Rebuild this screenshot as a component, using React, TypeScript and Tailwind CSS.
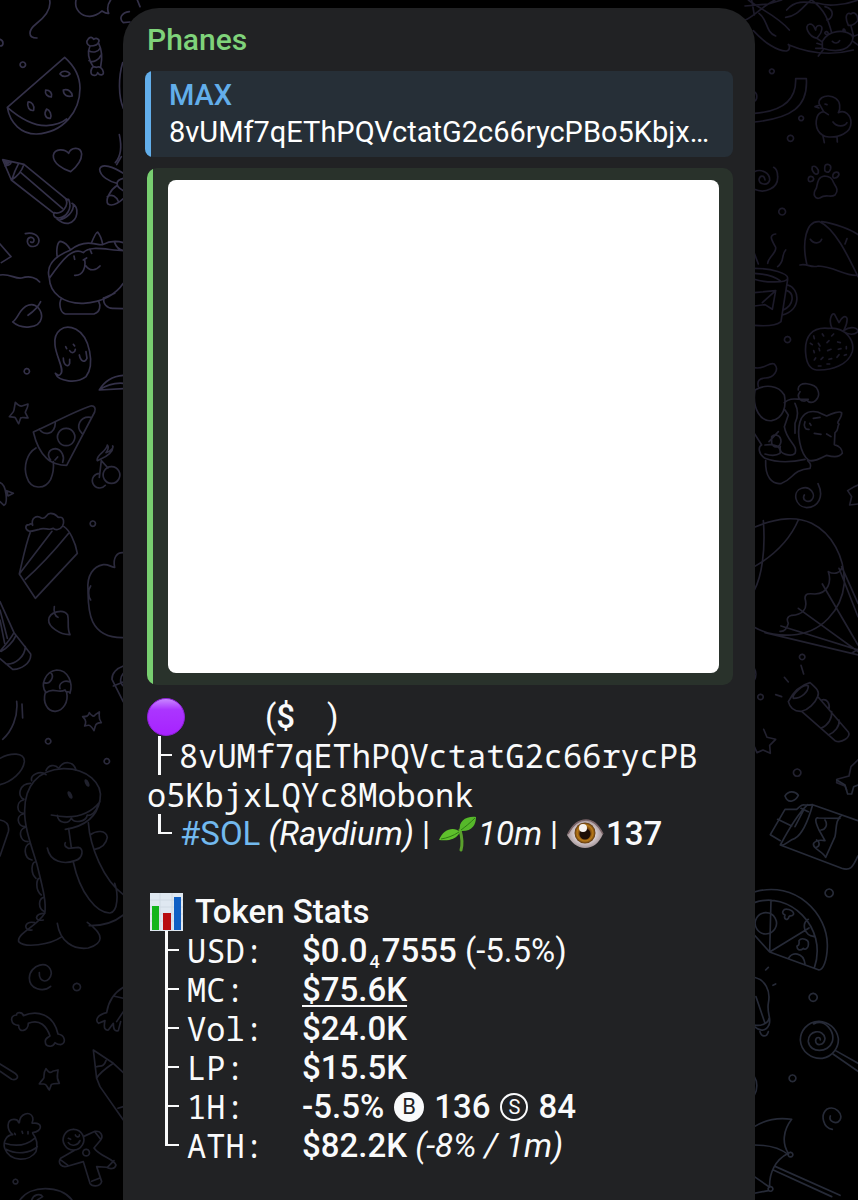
import type { ReactNode } from 'react';

const ADDRESS = '8vUMf7qEThPQVctatG2c66rycPBo5KbjxLQYc8Mobonk';

const DOODLES = [
  {
    id: 'left-top',
    transform: 'translate(0 0) scale(0.3333)',
    color: '#343149',
    paths: [
      'M149 0C155 30 130 55 108 72C85 90 82 114 111 114',
      'M228 0C222 30 245 50 270 49C290 48 300 38 306 33C314 38 322 41 326 40C320 25 325 10 332 0',
      'M388 35C365 38 355 55 370 68L390 66M412 0L420 20',
      'M264 118C270 108 278 112 281 118C290 112 300 118 296 126C294 134 282 138 270 138C260 134 258 124 264 118ZM270 138C262 155 264 180 280 200M296 130C306 150 306 180 302 200M266 152C280 160 295 155 300 145M267 182C280 190 298 178 303 165M280 200C270 208 270 226 282 226C288 228 292 222 293 218C300 228 312 226 310 216C308 206 300 198 290 202Z',
      'M194 172L22 322C30 370 65 403 110 402C190 398 240 335 240 265C240 225 220 195 194 172ZM22 322C60 355 100 378 140 377C165 376 185 370 200 357',
      'M180 222C186 210 205 212 210 222C203 231 187 232 180 222ZM137 270C150 270 158 280 154 291C142 290 134 282 137 270ZM190 270C205 266 216 276 217 288C203 292 190 286 190 270ZM84 306C95 304 105 318 101 331C88 334 80 320 84 306ZM140 327C150 330 156 345 151 355C137 356 130 342 140 327Z',
      'M68 186A8 8 0 1 0 69 186M0 118C12 122 12 138 0 138',
      'M212 515C190 508 158 490 160 466C164 444 195 446 206 460C212 442 242 438 245 462C245 485 228 502 212 515Z',
      'M8 479L72 493C66 512 55 528 34 540ZM72 493L202 600M60 516L188 626M34 540L162 640M56 490C45 510 40 525 36 538M30 484C35 488 34 494 15 498',
      'M198 598C206 615 188 645 162 638C158 648 165 655 176 654C200 652 218 625 206 598ZM216 610C238 622 236 660 206 670C192 672 180 665 170 656M220 614C222 635 200 656 178 660',
      'M358 404C366 440 362 470 346 488M364 470L350 494M370 520C340 500 304 488 299 508C300 530 330 545 350 550M370 535C345 540 345 560 370 572M352 556C330 570 315 600 324 612C340 622 360 605 370 596M322 590C335 580 350 590 356 606M368 188C355 230 355 290 370 325',
      'M76 701C96 696 116 704 117 722C116 744 84 746 82 725C82 710 100 708 102 720C102 727 98 729 92 726',
      'M0 732L33 770L4 788M0 825C30 820 45 838 65 834C90 826 110 834 119 846',
      'M172 772C168 750 172 724 182 724C192 726 205 738 212 750C230 735 255 728 274 730C280 715 288 696 293 696C300 705 306 720 308 734C330 722 350 722 370 728M148 835C138 800 160 770 212 750M148 835C150 880 190 912 250 910C310 908 350 880 370 850M148 835C190 775 220 740 250 758C270 735 320 750 370 752M274 730C290 732 300 736 308 734M344 728C350 745 360 750 370 752M310 895L344 880',
      'M222 768L224 778M270 748L275 760M250 780L260 774M254 780C258 800 250 828 224 826M258 798C270 816 290 810 300 798',
      'M184 896C176 910 180 938 196 942L282 942C302 936 302 915 296 904M312 894C308 910 320 926 340 925L370 926',
      'M38 966C55 955 58 925 84 916C110 906 128 935 124 955C118 985 65 990 38 966ZM84 946C100 935 115 920 122 905',
      'M166 1120C175 1145 230 1152 258 1130C285 1095 270 1010 228 988C190 970 160 995 165 1035C168 1070 195 1110 182 1122C178 1130 172 1124 166 1120ZM190 1074C190 1095 205 1105 209 1090L209 1078M238 1065C242 1085 255 1090 261 1075L258 1055M197 1040L200 1046M220 1033L224 1038M209 1052C215 1062 225 1058 226 1048',
      'M80 1106A8 8 0 1 0 81 1106M298 1170C315 1140 345 1128 370 1126M298 1170C320 1155 345 1148 370 1150M298 1170L370 1166',
    ],
  },
  {
    id: 'left-middle',
    transform: 'translate(0 390) scale(0.3333)',
    color: '#2b2a3c',
    paths: [
      'M46 37C54 45 60 50 66 48L84 42C84 55 76 62 76 68L84 84C72 84 68 80 62 84L56 101C50 92 48 84 44 82L28 80C34 72 42 66 42 60Z',
      'M100 126C160 100 220 65 272 48C284 46 288 56 284 66L200 226C180 226 150 218 140 205C118 185 108 160 100 126ZM118 117C130 138 165 135 166 98M272 82C240 78 225 110 246 130M198 115A26 26 0 1 0 199 115M188 217C195 200 185 178 166 176C145 178 140 195 152 210M165 210L173 201',
      'M108 174C80 190 70 230 80 260C92 300 135 300 152 268C160 250 162 235 160 215',
      'M292 212C286 195 320 185 322 165C328 172 324 180 318 188C335 184 342 170 338 168C342 185 320 200 304 206ZM304 212L298 262M304 212L324 234M300 250A22 22 0 1 0 316 286M334 230A25 25 0 1 0 335 230M0 278C20 285 24 340 12 346L0 335M20 302L40 310L24 318Z',
      'M88 424C74 418 74 404 88 404C92 400 96 402 98 406C92 384 110 374 124 384C140 390 136 370 152 370C172 370 170 384 178 382C194 380 192 400 188 408C180 420 165 422 160 415C145 424 135 410 118 418C108 420 100 424 88 424ZM92 424C78 460 70 500 58 552L106 625L232 490C226 455 208 420 192 410M58 552L156 424M76 568C120 530 165 480 206 430',
      'M278 393A8 8 0 1 0 279 393M370 488C350 486 338 505 344 532C330 530 325 522 310 524C280 530 260 555 264 600C265 650 260 745 370 743M272 588C264 600 264 618 272 630',
      'M210 734C180 735 145 710 146 690C148 665 190 655 203 675C208 695 200 715 210 734ZM163 650C160 665 166 680 174 682',
      'M0 635L42 728C30 750 20 760 0 784M0 660L22 745M0 690L14 760M42 728L92 792C95 820 60 840 38 838L0 806M76 770C75 800 45 825 18 822M48 736C40 755 20 776 4 784',
      'M138 908C120 885 135 845 170 840C205 840 220 880 210 910C205 898 200 914 195 900C175 912 160 890 138 908ZM136 908C128 935 140 965 166 964C190 962 206 935 200 908M152 848C165 860 150 885 132 878M210 876C190 868 175 882 180 896',
      'M370 828C350 835 335 850 336 868L370 936M370 850C360 862 358 880 370 888M340 888L370 876',
      'M268 968C275 978 282 982 286 974L298 966C298 980 294 985 304 998C294 998 288 1000 286 1008L282 1022C276 1012 270 1004 264 1006L254 1008C258 998 260 992 248 980C258 980 266 980 268 968Z',
      'M50 934C55 980 35 1025 8 1048M66 942L68 984M144 1046A8 8 0 1 0 145 1046M320 1106A8 8 0 1 0 321 1106',
    ],
  },
  {
    id: 'left-bottom',
    transform: 'translate(0 750) scale(0.3333)',
    color: '#20212d',
    paths: [
      'M0 25C30 8 75 5 73 35C70 65 35 95 0 104M0 210C25 215 28 230 25 245L0 318',
      'M74 180C75 110 110 60 190 56C260 55 310 100 300 150C290 205 250 230 196 238M154 195C200 205 260 205 300 155M74 180C72 230 95 290 110 340C130 420 140 460 134 490C110 530 50 550 56 575C75 595 150 585 186 560',
      'M172 196C175 220 205 225 214 204C220 220 258 218 262 195C272 200 290 185 294 165M95 92C90 75 120 60 138 74M138 62C145 44 165 42 176 55M178 53C190 32 220 32 228 60M72 148C50 140 58 100 92 100M72 190C48 190 48 155 70 150M76 230C50 230 48 195 70 192M84 275C60 275 52 240 76 232M96 330C70 325 70 285 90 280M108 385C90 370 95 335 106 336M124 435C104 420 110 385 118 385M134 485C112 475 116 445 132 442M130 510C100 515 105 490 134 490M96 540C70 545 70 510 104 518',
      'M142 294C150 335 190 345 225 332C250 325 252 295 235 292L205 295C195 290 192 285 196 278M206 236L214 292M220 336C240 430 290 490 330 489C355 485 355 430 344 400M265 218C270 290 310 390 370 434M270 255C290 240 318 240 322 262C318 285 300 295 284 298M172 520C180 575 220 600 265 594C310 580 315 555 262 517M268 527C310 528 345 515 370 495',
      'M152 709C130 728 88 718 88 684C88 645 150 625 154 670C150 702 115 700 118 668M230 700A11 11 0 1 0 231 700',
      'M56 826C30 825 28 795 50 795C48 785 68 785 70 797C110 780 160 790 174 852C195 855 200 880 182 884C170 884 168 880 165 878C158 895 136 890 136 875C134 865 146 862 150 858C140 830 120 805 85 820C85 845 55 850 56 826Z',
      'M370 712C340 730 325 755 320 788C290 795 285 812 296 820L315 812C310 835 315 842 325 840L340 820C340 840 345 845 355 842L362 815M340 738L370 745M350 815L370 785',
      'M0 942L45 970C60 980 50 992 35 988L0 964M280 900L340 940C310 960 295 975 290 985ZM290 985L300 1010L370 1110M340 940L370 968M290 950C300 945 310 955 318 932M354 1075L370 1070',
      'M138 956C146 968 150 970 158 964L174 960C174 975 166 980 178 1000C168 1000 158 1000 154 1004L148 1020C140 1010 140 1002 132 1002L118 1002C124 990 132 988 132 982C132 975 130 968 138 956Z',
      'M38 1154C20 1140 18 1108 42 1108C60 1108 52 1120 58 1118C60 1090 90 1082 98 1102C102 1118 92 1118 98 1120C130 1115 128 1145 98 1148M38 1154C20 1155 8 1175 14 1195C30 1238 90 1235 108 1205C115 1180 110 1165 98 1150M14 1180C40 1188 75 1190 104 1165M18 1198C50 1215 90 1210 112 1190M44 1150L46 1154M66 1144L68 1150M84 1145L84 1152',
      'M220 1138A31 31 0 1 0 221 1138M250 1160L285 1144C305 1142 310 1160 302 1170L282 1194C300 1220 340 1225 348 1245C345 1258 330 1258 320 1252L290 1250L305 1295C300 1312 275 1310 270 1300L250 1235L205 1248C185 1255 172 1240 182 1225L225 1200M258 1198A10 10 0 1 0 259 1198M205 1165L212 1168M226 1155C230 1165 240 1160 238 1155M205 1178C215 1192 235 1185 240 1172M180 1228L204 1246M285 1146L302 1168M275 1294L300 1284M322 1252L342 1232',
      'M46 1288A7 7 0 1 0 47 1288M60 1350C90 1305 180 1305 216 1350M95 1350C100 1335 120 1328 128 1340L112 1350',
    ],
  },
  {
    id: 'right-top',
    transform: 'translate(745 0) scale(0.3333)',
    color: '#1c1a29',
    paths: [
      'M0 60C20 55 50 20 90 0M0 18L70 12L110 0M20 0L28 45M10 0C50 30 100 50 133 90M42 40C70 60 60 95 92 108M25 92C60 130 100 155 125 153C140 148 130 130 130 134C180 155 250 170 325 150M122 52C160 50 180 10 200 0M200 0C240 30 250 60 260 98M125 30C150 0 180 5 220 10C250 20 300 15 339 0M240 20C275 30 260 60 245 60',
      'M232 124C250 90 300 85 325 110C320 150 280 160 232 145ZM216 115C190 110 175 75 195 72C208 72 208 85 212 90C212 72 235 72 230 90C228 105 218 108 216 115L232 126M310 76C298 50 305 35 318 42C325 35 340 40 338 62C330 72 322 78 310 76ZM318 78L325 105M262 124C268 132 280 130 284 122M216 130L232 135M212 145L230 145M220 168L234 150M322 110L339 104M325 125L339 135M246 104C232 100 245 88 250 100M296 96C290 84 302 85 300 96',
      'M80 207A7 7 0 1 0 81 207M168 348A7 7 0 1 0 169 348M136 406A9 9 0 1 0 137 406M111 625A10 10 0 1 0 112 625M127 1010A9 9 0 1 0 128 1010M28 275C38 280 38 300 28 304',
      'M28 340C100 335 155 310 152 236L184 236C190 320 140 355 28 366',
      'M222 310C220 280 280 280 284 315C286 330 282 335 280 338C300 328 318 345 318 368C318 400 280 412 252 411C220 408 208 380 216 352C220 340 228 336 236 335ZM236 335L250 344M222 316L210 320L222 324M264 366C275 382 300 380 306 368M240 312L246 314M234 408L238 428M276 410L277 426',
      'M28 515C50 505 75 520 74 540C70 558 42 555 42 538C45 525 58 525 60 540M28 568C60 582 100 565 98 530C98 515 92 505 86 502',
      'M238 528C218 530 218 550 214 565C200 585 212 598 224 594C245 580 255 595 270 585C285 568 268 556 266 548C262 535 255 528 238 528ZM202 500C198 515 215 530 220 518C222 505 210 496 202 500ZM240 498C235 520 252 522 257 506C260 492 242 490 240 498ZM264 524C260 540 278 535 282 524C282 514 268 514 264 524ZM190 536C188 550 206 545 206 536C204 528 192 526 190 536Z',
      'M186 795C170 730 182 660 224 665C270 685 310 770 339 830M230 665C270 670 320 690 339 704M165 795C190 790 195 805 220 798C270 800 300 830 339 826M196 718C205 732 225 732 230 718M300 732L306 716',
      'M68 790C70 770 95 760 92 742C80 720 70 705 92 702M98 800C120 785 108 765 122 750M28 805C80 805 130 820 128 835C125 850 60 848 28 838M28 820C60 822 90 830 105 842M128 838L108 965C90 980 50 978 28 976M128 855C165 865 170 930 112 945M126 872C148 880 148 915 115 930M28 878L92 872L82 928L60 914L28 918M92 872L52 908M28 760L40 792',
      'M182 1060C178 1010 200 980 250 985C300 980 330 1020 322 1055C310 1095 260 1112 215 1110C190 1108 184 1085 182 1060ZM262 986C250 965 258 940 268 942L282 968C290 950 302 945 306 955C308 970 302 980 296 992C320 975 339 985 339 995C330 1005 310 1006 296 995',
      'M206 1008L208 1016M232 1002L236 1008M260 1008L266 1002M196 1030L202 1034M220 1030L225 1038M246 1028L252 1022M278 1026L286 1028M206 1052L208 1058M222 1045L224 1052M248 1052L258 1048M280 1048L288 1046M208 1080L212 1074M228 1078L234 1072M252 1078L260 1076M276 1072L282 1064M298 1066L304 1064M220 1098L228 1098M246 1092L254 1092M304 1040L304 1046',
      'M28 1103C60 1110 70 1085 88 1092C105 1110 85 1135 60 1134C45 1136 35 1140 40 1160',
    ],
  },
  {
    id: 'right-middle',
    transform: 'translate(745 390) scale(0.3333)',
    color: '#22212f',
    paths: [
      'M30 0C20 60 50 95 80 92C115 85 125 50 118 15C100 -15 60 -18 30 0M118 38C140 20 150 30 190 28M165 5C150 25 175 40 185 30C200 50 230 25 218 0C215 -20 155 -30 160 0M120 60L130 75L118 110C125 155 160 165 150 190C140 200 100 195 106 170M150 40C160 60 160 80 150 100L150 130M28 130L50 165C40 170 38 190 60 205C100 220 150 215 180 208M60 165C90 160 110 170 105 190C90 200 70 195 60 192M72 155L100 125M80 140C90 130 108 135 108 155C105 175 85 175 80 160Z',
      'M165 95C175 65 200 62 218 66L245 78C260 70 285 62 290 68C292 85 270 98 282 102C275 112 282 122 270 128L268 164C285 168 292 180 292 190C280 205 260 200 245 196C225 205 205 218 190 210C165 190 155 130 165 95ZM205 85L225 82M208 130L228 133M245 132L258 140M180 95C175 108 180 120 192 118M194 100L198 106',
      'M62 212C60 260 80 285 110 280C145 268 140 240 195 235C200 225 195 218 188 212',
      'M219 281C238 320 220 352 185 353C150 350 140 305 170 295C195 285 215 315 200 330C188 340 170 330 178 315M339 285L328 290L308 302L320 320L314 345L339 342',
      'M28 412C100 380 160 380 200 400C260 430 300 500 298 580C290 660 230 730 140 735C100 738 60 730 28 712M55 392C62 480 50 560 28 600M160 390C130 460 80 500 28 530M250 545C260 575 250 610 210 612C190 610 180 610 180 625C190 660 170 675 140 676C125 680 125 690 130 700C125 720 115 725 105 724M250 545C270 555 285 548 290 535M282 535L339 680M290 530L339 640M232 582L339 765M160 655L339 785M108 708L339 780M60 728L339 795M320 790L339 778',
      'M171 793A8 8 0 1 0 172 793M46 913A8 8 0 1 0 47 913M156 1137A11 11 0 1 0 157 1137M28 835C34 845 34 860 28 870',
      'M168 826L176 852M118 862L130 876M92 914L110 920M130 935C145 905 170 885 195 878C215 895 225 905 218 920C210 940 190 960 170 964C150 965 135 955 130 935ZM145 925C140 915 175 880 190 888C190 905 170 925 145 925ZM170 964L270 1052C290 1062 320 1040 310 1026L220 922M230 930C245 925 256 940 252 958M228 1015C250 1005 262 985 260 965M250 1035C270 1028 285 1008 282 990',
      'M56 1018L66 1042L92 1048L74 1066L76 1090L54 1080L36 1088L28 1070M339 1110L318 1130L312 1158L276 1168L275 1178L300 1188L305 1200',
    ],
  },
  {
    id: 'right-bottom',
    transform: 'translate(745 780) scale(0.3333)',
    color: '#262a37',
    paths: [
      'M275 0L300 15L308 42L320 42L326 20L339 15',
      'M120 48C130 32 150 32 160 46C152 62 130 75 120 48ZM155 88L120 88L76 164L106 182M98 118L140 138M155 88C180 65 170 80 203 74C190 120 175 160 150 175C130 180 120 200 106 195C130 150 160 100 188 74M150 140L175 92M168 85L190 95M203 74L339 122M106 195L290 265C320 275 325 255 339 228M290 105C270 120 275 150 270 170L242 232C235 215 200 205 206 190C215 178 230 180 240 182L222 150C205 115 215 112 220 114L285 115M240 120C250 135 240 150 228 150M215 180C225 185 225 198 215 202',
      'M252 327A12 12 0 1 0 253 327M204 640A12 12 0 1 0 205 640M142 885A10 10 0 1 0 143 885',
      'M28 336C150 300 250 400 247 500C246 540 235 570 222 570L74 516L28 465M28 368C130 330 250 440 208 564M78 360L74 516L192 444M62 398A32 32 0 1 0 63 398M190 418C170 430 175 465 208 470M130 536C140 515 175 515 180 552M115 392C120 382 145 390 146 402C142 412 135 404 132 410C128 424 115 418 120 405C112 402 112 396 115 392ZM162 482C170 470 192 480 190 490C192 504 180 512 175 505C165 515 155 508 156 498C165 496 162 488 162 482Z',
      'M62 570L70 562M84 616L92 612M28 592C60 600 78 630 70 670C65 700 80 715 72 735C60 760 40 750 28 740M33 650L60 730M28 735C45 740 70 730 72 715M45 755C50 772 65 772 70 755',
      'M222 724C185 725 166 755 166 780C168 815 200 838 232 835C265 830 282 800 280 775C275 745 250 725 222 724ZM206 732C240 715 270 755 262 785C250 820 195 820 190 785C188 750 235 745 240 775C238 798 210 800 212 780C214 770 226 770 226 780M272 812L339 850M264 822L339 874',
      'M262 1048C235 1045 225 1005 245 988C270 975 295 1000 285 1020C275 1035 250 1025 256 1008M28 1040C60 1020 100 1012 140 1018C115 1050 110 1090 130 1120C90 1140 72 1180 74 1222L28 1190M28 1095C60 1095 100 1100 130 1124M136 1117A7 7 0 1 0 137 1117M76 1220A7 7 0 1 0 77 1220M28 1240L70 1232M92 1160L285 1246M85 1170L260 1250M28 890C38 905 38 930 28 945',
    ],
  },
];

function Wallpaper() {
  return (
    <svg
      className="absolute inset-0 h-full w-full"
      viewBox="0 0 858 1200"
      preserveAspectRatio="xMidYMin slice"
      fill="none"
      strokeWidth={5}
      strokeLinecap="round"
      strokeLinejoin="round"
      aria-hidden="true"
    >
      {DOODLES.map(({ id, transform, color, paths }) => (
        <g key={id} transform={transform} stroke={color}>
          {paths.map((d) => (
            <path key={d} d={d} />
          ))}
        </g>
      ))}
      <path d="M3 160L11 162L6 166Z" fill="#343149" />
      <g fill="#20212d">
        <ellipse cx="70" cy="795" rx="2" ry="4" transform="rotate(-25 70 795)" />
        <ellipse cx="87" cy="783" rx="2" ry="4" transform="rotate(-25 87 783)" />
      </g>
    </svg>
  );
}

function PurpleCircle() {
  return (
    <svg className="h-10 w-10 shrink-0" viewBox="0 0 40 40" aria-hidden="true">
      <defs>
        <linearGradient id="purple" x1="0" y1="0" x2="0" y2="1">
          <stop offset="0" stopColor="#c98bff" />
          <stop offset="0.3" stopColor="#ab35ff" />
          <stop offset="1" stopColor="#a722ff" />
        </linearGradient>
      </defs>
      <circle cx="19" cy="20" r="18.5" fill="url(#purple)" stroke="#8d1fd6" />
    </svg>
  );
}

function Seedling() {
  return (
    <svg className="h-10 w-10 shrink-0" viewBox="0 0 40 40" aria-hidden="true">
      <path
        d="M22 16C24 23 25 29 23 36"
        fill="none"
        stroke="#5aa02c"
        strokeWidth="3"
        strokeLinecap="round"
      />
      <path d="M22 18C16 12 5 15 1 26C10 27 18 26 22 18Z" fill="#5fc02c" />
      <path d="M22 17C20 7 28 2 38 3C38 11 34 18 22 17Z" fill="#56b82a" />
      <path
        d="M3 25C9 24 15 22 21 18M23 16C27 13 32 9 37 4"
        fill="none"
        stroke="#2f7d14"
      />
    </svg>
  );
}

function Eye() {
  return (
    <svg className="h-10 w-10 shrink-0" viewBox="0 0 40 40" aria-hidden="true">
      <defs>
        <radialGradient id="eyeball">
          <stop offset="0.4" stopColor="#f1e9ec" />
          <stop offset="1" stopColor="#a39497" />
        </radialGradient>
        <radialGradient id="iris">
          <stop offset="0.4" stopColor="#5a2d0c" />
          <stop offset="0.75" stopColor="#b87a18" />
          <stop offset="1" stopColor="#5b3510" />
        </radialGradient>
      </defs>
      <path
        d="M1 21C7 10 13 6 20 6C28 6 33 12 37 20C33 29 27 34 19 34C11 34 5 28 1 21Z"
        fill="url(#eyeball)"
      />
      <path
        d="M2 20C7 10 13 6 20 6C28 6 33 12 37 20"
        fill="none"
        stroke="#7a6468"
        strokeWidth="1.5"
      />
      <circle cx="19" cy="19" r="10.5" fill="url(#iris)" />
      <circle cx="19" cy="20" r="5.5" fill="#1c0e07" />
      <circle cx="17" cy="14" r="4" fill="#f7f3f0" />
    </svg>
  );
}

function BarChart() {
  return (
    <svg className="h-10 w-9 shrink-0" viewBox="0 0 36 40" aria-hidden="true">
      <rect x="3" y="1" width="33" height="38" fill="#dfe8f1" />
      <path
        d="M3 8H36M3 15H36M3 22H36M3 29H36M13 1V39M25 1V39"
        stroke="#d0dae4"
      />
      <rect x="5" y="14" width="7" height="24" fill="#12b51c" />
      <rect x="16" y="21" width="8" height="17" fill="#b80d10" />
      <rect x="27" y="5" width="7" height="33" fill="#0f5fc4" />
    </svg>
  );
}

// ├ and └ in front of a line
function Branch({ last = false }: { last?: boolean }) {
  return (
    <span aria-hidden="true" className="flex h-[39px] w-3.5 shrink-0">
      <span
        className={
          last
            ? 'h-5 w-full border-b-2 border-l-[3px] border-gray-50'
            : 'h-full w-full border-l-[3px] border-gray-50'
        }
      >
        {!last && <span className="mt-[18px] block h-0.5 bg-gray-50" />}
      </span>
    </span>
  );
}

function Stat({
  label,
  last = false,
  children,
}: {
  label: string;
  last?: boolean;
  children: ReactNode;
}) {
  return (
    <div className="flex pl-[18px]">
      <Branch last={last} />
      <dt className="ml-2 w-[115px] shrink-0 font-['Noto_Sans_Mono','DejaVu_Sans_Mono',monospace] text-[32px] leading-[39px]">
        {label}
      </dt>
      <dd className="whitespace-nowrap font-medium">{children}</dd>
    </div>
  );
}

function App() {
  return (
    <div className="relative min-h-screen overflow-hidden bg-black pt-2 font-[Roboto,sans-serif] text-gray-50">
      <Wallpaper />
      <article className="relative ml-[123px] mr-[103px] min-h-[calc(100vh-8px)] rounded-t-[36px] bg-[#212224] pb-8 pl-6 pr-[22px] pt-3">
        <h1 className="text-[30px] font-medium leading-10 text-[#7fd37a]">
          Phanes
        </h1>

        <blockquote className="-ml-0.5 mt-[11px] flex overflow-hidden rounded-lg bg-[#262f37]">
          <span className="w-1.5 shrink-0 bg-[#62aeea]" />
          <div className="min-w-0 py-1.5 pl-[18px] pr-2">
            <p className="text-[29px] font-medium leading-9 text-[#62aeea]">
              MAX
            </p>
            <p className="whitespace-nowrap text-[29px] leading-[38px] text-white">
              {ADDRESS.slice(0, 33)}…
            </p>
          </div>
        </blockquote>

        <div className="mt-[11px] flex overflow-hidden rounded-[10px] bg-[#29322b]">
          <span className="w-1.5 shrink-0 bg-[#78cf70]" />
          <div className="grow py-3 pl-[15px] pr-3.5">
            <div className="aspect-[551/493] rounded-lg bg-white" />
          </div>
        </div>

        <div className="mt-3 text-[33px] leading-[39px]">
          <div className="flex h-[39px] items-center">
            <PurpleCircle />
            <p className="ml-[78px]">
              (<b className="font-medium">$</b>
            </p>
            <p className="ml-8">)</p>
          </div>
          <div className="relative">
            <span className="absolute left-[11px] top-0">
              <Branch />
            </span>
            <p className="break-all pr-6 indent-8 font-['Noto_Sans_Mono','DejaVu_Sans_Mono',monospace] text-[32px] leading-[39px]">
              {ADDRESS}
            </p>
          </div>
          <div className="flex h-[39px] items-center whitespace-nowrap pl-[11px]">
            <Branch last />
            <a href="#SOL" className="ml-2 text-[#72b9ee]">
              #SOL
            </a>
            <span className="ml-2 italic">(Raydium)</span>
            <span className="ml-2">|</span>
            <span className="ml-2 flex items-center">
              <Seedling />
              <i>10m</i>
            </span>
            <span className="ml-2">|</span>
            <span className="ml-2 flex items-center font-medium">
              <Eye />
              137
            </span>
          </div>

          <h2 className="mt-[39px] flex h-[39px] items-center font-medium">
            <BarChart />
            <span className="ml-3">Token Stats</span>
          </h2>
          <dl>
            <Stat label="USD:">
              $0.0
              <sub className="bottom-0 top-1.5 mx-0.5 text-[18px] leading-none">
                4
              </sub>
              7555 <span className="font-normal">(-5.5%)</span>
            </Stat>
            <Stat label="MC:">
              <a
                href="#mc"
                className="underline decoration-2 underline-offset-4 [text-decoration-skip-ink:none]"
              >
                $75.6K
              </a>
            </Stat>
            <Stat label="Vol:">$24.0K</Stat>
            <Stat label="LP:">$15.5K</Stat>
            <Stat label="1H:">
              <span className="flex items-center gap-2.5">
                -5.5%
                <span className="grid h-[30px] w-[30px] place-items-center rounded-full bg-gray-50 text-[22px] font-normal leading-none text-[#212224]">
                  B
                </span>
                136
                <span className="grid h-7 w-7 place-items-center rounded-full border-2 border-gray-50 text-[20px] font-normal leading-none">
                  S
                </span>
                84
              </span>
            </Stat>
            <Stat label="ATH:" last>
              $82.2K <i className="font-normal">(-8% / 1m)</i>
            </Stat>
          </dl>
        </div>
      </article>
    </div>
  );
}

export default App;
